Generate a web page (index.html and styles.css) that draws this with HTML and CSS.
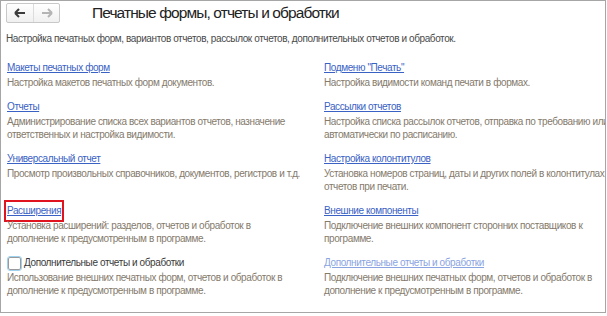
FILE: index.html
```html
<!DOCTYPE html>
<html>
<head>
<meta charset="UTF-8">
<title>Печатные формы, отчеты и обработки</title>
<link rel="stylesheet" href="styles.css">
</head>
<body>

<div class="frame">
  <div class="header">
    <div class="nav">
      <button class="nav-btn">
        <svg width="12" height="10" viewBox="0 0 12 10"><path d="M1 5h10M1 5l4-4M1 5l4 4" stroke="#3c3c3c" stroke-width="2" fill="none"/></svg>
      </button>
      <button class="nav-btn">
        <svg width="12" height="10" viewBox="0 0 12 10"><path d="M11 5H1M11 5L7 1M11 5L7 9" stroke="#b4b4b4" stroke-width="2" fill="none"/></svg>
      </button>
    </div>
    <h1 class="title">Печатные формы, отчеты и обработки</h1>
  </div>

  <p class="intro">Настройка печатных форм, вариантов отчетов, рассылок отчетов, дополнительных отчетов и обработок.</p>

  <div class="grid">
    <div class="item">
      <a class="link" href="#">Макеты печатных форм</a>
      <div class="desc">Настройка макетов печатных форм документов.</div>
    </div>
    <div class="item">
      <a class="link" href="#">Подменю "Печать"</a>
      <div class="desc">Настройка видимости команд печати в формах.</div>
    </div>

    <div class="item">
      <a class="link" href="#">Отчеты</a>
      <div class="desc">Администрирование списка всех вариантов отчетов, назначение<br>ответственных и настройка видимости.</div>
    </div>
    <div class="item">
      <a class="link" href="#">Рассылки отчетов</a>
      <div class="desc">Настройка списка рассылок отчетов, отправка по требованию или<br>автоматически по расписанию.</div>
    </div>

    <div class="item">
      <a class="link" href="#">Универсальный отчет</a>
      <div class="desc">Просмотр произвольных справочников, документов, регистров и т.д.</div>
    </div>
    <div class="item">
      <a class="link" href="#">Настройка колонтитулов</a>
      <div class="desc">Установка номеров страниц, даты и других полей в колонтитулах<br>отчетов при печати.</div>
    </div>

    <div class="item">
      <a class="link marked" href="#">Расширения</a>
      <div class="desc">Установка расширений: разделов, отчетов и обработок в<br>дополнение к предусмотренным в программе.</div>
    </div>
    <div class="item">
      <a class="link" href="#">Внешние компоненты</a>
      <div class="desc">Подключение внешних компонент сторонних поставщиков к<br>программе.</div>
    </div>

    <div class="item">
      <label class="check"><span class="box"></span>Дополнительные отчеты и обработки</label>
      <div class="desc">Использование внешних печатных форм, отчетов и обработок в<br>дополнение к предусмотренным в программе.</div>
    </div>
    <div class="item">
      <a class="link disabled" href="#">Дополнительные отчеты и обработки</a>
      <div class="desc">Подключение внешних печатных форм, отчетов и обработок в<br>дополнение к предусмотренным в программе.</div>
    </div>
  </div>
</div>

</body>
</html>
```

FILE: styles.css
```css
  body {
    margin: 0;
    font-family: 'Liberation Sans', Arial, sans-serif;
    font-size: 10px;
    letter-spacing: -0.4px;
    background-color: white;
  }
  .frame {
    border: 1px solid #a6a6a6;
    box-sizing: border-box;
    width: 606px;
    height: 313px;
    overflow: hidden;
  }
  .header {
    display: flex;
    align-items: center;
    padding: 2px 0 0 5px;
  }
  .nav {
    display: flex;
    border: 1px solid #c8c8c8;
    border-radius: 2px;
    background: linear-gradient(#ffffff, #f0f0f0);
  }
  .nav-btn {
    width: 26px;
    height: 18px;
    padding: 0;
    border: none;
    background: none;
    display: flex;
    align-items: center;
    justify-content: center;
  }
  .nav-btn + .nav-btn {
    border-left: 1px solid #dcdcdc;
  }
  .title {
    margin: 0 0 0 32px;
    font-size: 15.5px;
    letter-spacing: -0.9px;
    font-weight: normal;
    color: #222;
  }
  .intro {
    margin: 9px 0 0 5px;
    color: #4a4a4a;
    line-height: 13px;
  }
  .grid {
    display: grid;
    grid-template-columns: 317px 1fr;
    row-gap: 10px;
    padding: 15px 0 0 6px;
  }
  .link {
    display: inline-block;
    color: #3a62c4;
    line-height: 16px;
    text-decoration: underline;
  }
  .link.marked {
    outline: 2px solid #e0141e;
    outline-offset: 1px;
  }
  .link.disabled {
    color: #8aa4e2;
  }
  .desc {
    color: #857a6c;
    line-height: 13px;
    white-space: nowrap;
  }
  .check {
    display: flex;
    align-items: center;
    line-height: 16px;
    color: #3a3a3a;
  }
  .box {
    width: 11px;
    height: 11px;
    border: 1px solid #9a9a9a;
    border-radius: 2px;
    outline: 1px solid #9fd2ee;
    margin: 0 3px 0 1px;
    background: white;
  }
```
